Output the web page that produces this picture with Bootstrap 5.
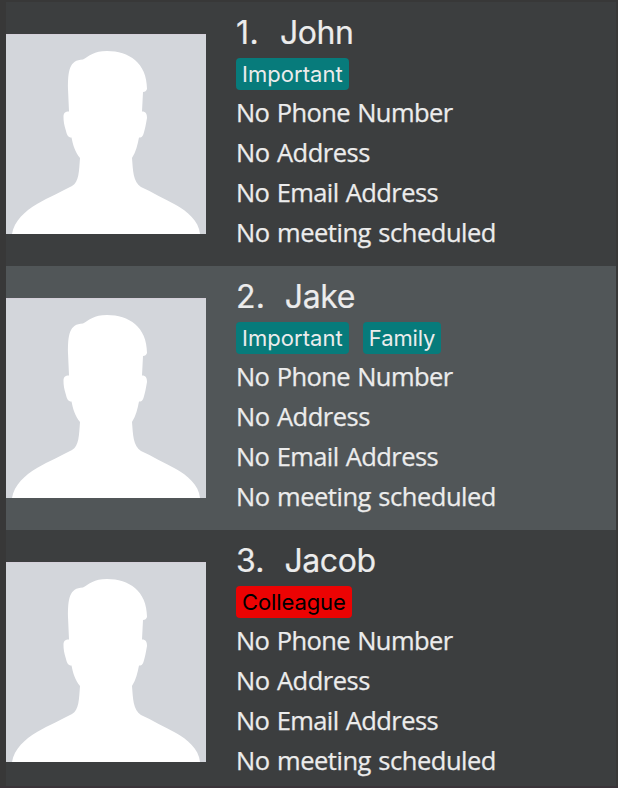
<!DOCTYPE html>
<html lang="en">
<head>
<meta charset="utf-8">
<title>Contacts</title>
<link href="https://cdn.jsdelivr.net/npm/bootstrap@5.3.0/dist/css/bootstrap.min.css" rel="stylesheet">
<style>
body{background:#383838;color:#ececec;height:788px;overflow:hidden;border-bottom:2px solid #3a3439}
.people{padding:2px 2px 0 6px}
.person{height:264px;background:#3c3e3f}
.person.alt{background:#515658}
.avatar{width:200px;height:200px;margin-right:30px;background:linear-gradient(#d5d0da 1px,#d3d6db 1px)}
.info{padding-top:10px;white-space:nowrap}
.title{font:400 32px/42px Inter,"Liberation Sans",sans-serif;height:46px;letter-spacing:-.4px;-webkit-text-stroke:.2px currentColor}
.num{margin-right:19.5px;letter-spacing:.3px}
.first .num{margin-right:20.7px;letter-spacing:.5px}
.tags{height:32px;gap:14px;margin-bottom:2px}
.tag{font:400 22px/32px Inter,"Liberation Sans",sans-serif;padding:0 6px;border-radius:4px;background:#077b7b;color:#ececec;letter-spacing:.05px}
.tag.family{letter-spacing:-.1px}
.tag.red{background:#ec0303;color:#000;letter-spacing:-.1px}
.line{font:400 25.5px/40px "Open Sans","Noto Sans",sans-serif;height:40px;word-spacing:1.3px;-webkit-text-stroke:.25px currentColor}
.l1{letter-spacing:-.6px}.l2{letter-spacing:-.5px}.l3{letter-spacing:-.6px}.l4{letter-spacing:-.48px}
</style>
<script src="https://cdn.jsdelivr.net/npm/bootstrap@5.3.0/dist/js/bootstrap.bundle.min.js"></script>
</head>
<body>
<svg class="d-none"><symbol id="face" viewBox="0 0 200 200"><path fill="#fff" d="M6 200C8 187 19 177 31 170C43 163 55 158 66 152C73 148 73 137 74 124C69 118 67 111 65.500 103.500C62 103.500 61 101 60 97C58 91 57.500 87 57.500 83C57.500 79 59 77.500 63 77.500L62 55C62 37 63 26 77 25.500C83 22 88 17 101 17C123 17 141 29 141 55Q140 58 137 58L136 77.500C140 77.500 141 80 141 84C140 90 139 95 137.500 100C136.500 103 135 103.500 133 103.500C131.500 111 130 118 126 124C127 136 127 148 135 153C146 158 158 165 170 171C181 177 193 187 194 200Z"/></symbol></svg>
<main class="people">
<article class="person first d-flex align-items-center">
<svg class="avatar flex-shrink-0" viewBox="0 0 200 200"><use href="#face"/></svg>
<div class="info align-self-start">
<div class="title"><span class="num">1.</span><span>John</span></div>
<div class="tags d-flex"><span class="tag">Important</span></div>
<div class="line l1"><span>No Phone Number</span></div><div class="line l2"><span>No Address</span></div><div class="line l3"><span>No Email Address</span></div><div class="line l4"><span>No meeting scheduled</span></div>
</div>
</article>
<article class="person alt d-flex align-items-center">
<svg class="avatar flex-shrink-0" viewBox="0 0 200 200"><use href="#face"/></svg>
<div class="info align-self-start">
<div class="title"><span class="num">2.</span><span>Jake</span></div>
<div class="tags d-flex"><span class="tag">Important</span><span class="tag family">Family</span></div>
<div class="line l1"><span>No Phone Number</span></div><div class="line l2"><span>No Address</span></div><div class="line l3"><span>No Email Address</span></div><div class="line l4"><span>No meeting scheduled</span></div>
</div>
</article>
<article class="person d-flex align-items-center">
<svg class="avatar flex-shrink-0" viewBox="0 0 200 200"><use href="#face"/></svg>
<div class="info align-self-start">
<div class="title"><span class="num">3.</span><span>Jacob</span></div>
<div class="tags d-flex"><span class="tag red">Colleague</span></div>
<div class="line l1"><span>No Phone Number</span></div><div class="line l2"><span>No Address</span></div><div class="line l3"><span>No Email Address</span></div><div class="line l4"><span>No meeting scheduled</span></div>
</div>
</article>
</main>
</body>
</html>
